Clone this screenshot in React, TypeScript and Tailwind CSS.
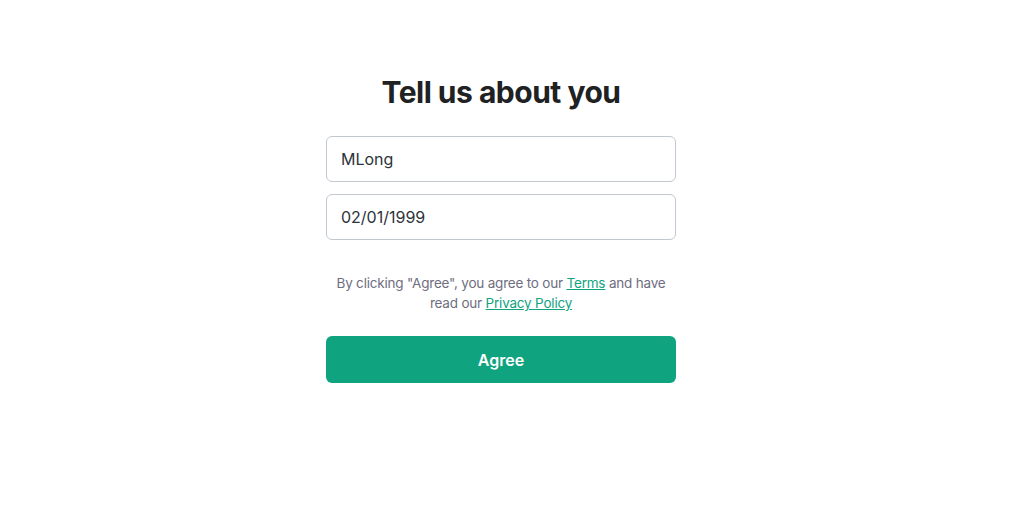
const App = () => {
  return (
    <div className="min-h-[509px] bg-white pr-[7px] font-['Inter',sans-serif]">
      <div className="mx-auto w-[350px] pt-[72px] flex flex-col">
        <h1 className="text-center text-[30px] leading-[40px] font-bold tracking-[-0.5px] text-[#202123]">
          Tell us about you
        </h1>
        <div className="mt-[24px] flex flex-col gap-[12px]">
          <input
            defaultValue="MLong"
            className="h-[46px] w-full rounded-md border border-[#c2c8d0] px-[14px] text-[16px] text-[#2d333a] outline-none"
          />
          <input
            defaultValue="02/01/1999"
            className="h-[46px] w-full rounded-md border border-[#c2c8d0] px-[14px] text-[16px] text-[#2d333a] outline-none"
          />
        </div>
        <p className="mt-[33px] text-center text-[13.5px] leading-[20px] tracking-[-0.2px] text-[#6e6e80]">
          By clicking "Agree", you agree to our{" "}
          <a href="#" className="text-[#10a37f] underline">
            Terms
          </a>{" "}
          and have read our{" "}
          <a href="#" className="text-[#10a37f] underline">
            Privacy Policy
          </a>
        </p>
        <button className="mt-[23px] h-[47px] w-full rounded-md bg-[#10a37f] text-[16px] font-semibold text-white">
          Agree
        </button>
      </div>
    </div>
  );
};

export default App;
